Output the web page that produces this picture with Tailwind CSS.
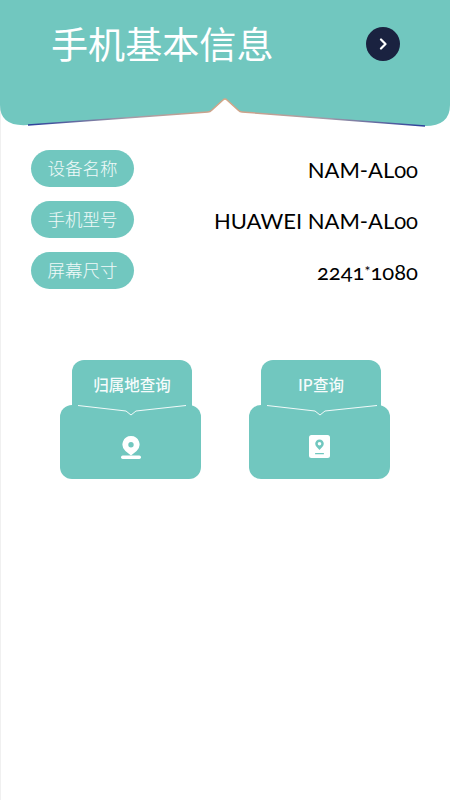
<!DOCTYPE html>
<html lang="zh-CN">
<head>
  <meta charset="UTF-8">
  <meta name="viewport" content="width=device-width, initial-scale=1.0">
  <title>手机基本信息</title>
  <script src="https://cdn.jsdelivr.net/npm/@tailwindcss/browser@4"></script>
</head>
<body class="w-[450px] h-[800px] overflow-hidden bg-white shadow-[inset_1px_0_0_#f0f0f0] font-['Lato','Noto_Sans_CJK_SC',sans-serif]">

  <!-- header -->
  <header class="relative h-[128px]">
    <svg class="absolute inset-0" width="450" height="128" viewBox="0 0 450 128">
      <defs>
        <linearGradient id="edge" x1="0" x2="1" y1="0" y2="0">
          <stop offset="0" stop-color="#2a3f9a"/>
          <stop offset="0.25" stop-color="#a39aa8"/>
          <stop offset="0.5" stop-color="#d6a585"/>
          <stop offset="0.75" stop-color="#a39aa8"/>
          <stop offset="1" stop-color="#2a3f9a"/>
        </linearGradient>
      </defs>
      <path d="M0 0H450V105Q450 126 425 126L242 112Q240 112 238 110L227 100Q225 98 223 100L212 110Q210 112 208 112L28 125Q0 127 0 105Z" fill="#71c7bf"/>
      <path d="M425 126L242 112Q240 112 238 110L227 100Q225 98 223 100L212 110Q210 112 208 112L28 125" fill="none" stroke="url(#edge)" stroke-width="1.500"/>
    </svg>
    <div class="relative flex items-center justify-between pl-[51px] pr-[50px] pt-[26px]">
      <h1 class="-mt-[2px] text-[37.100px] leading-[38px] text-white font-['Noto_Sans_CJK_SC',sans-serif]">手机基本信息</h1>
      <button class="w-[34px] h-[34px] rounded-full bg-[#1a2240] flex items-center justify-center">
        <svg width="12" height="12" viewBox="0 0 12 12" fill="none" stroke="#fff" stroke-width="2.200" stroke-linecap="round" stroke-linejoin="round"><path d="M4 1.500 8.500 6 4 10.500"/></svg>
      </button>
    </div>
  </header>

  <!-- device info -->
  <section class="mt-[22px] pl-[31px] pr-[32px] flex flex-col gap-[14.500px]">
    <div class="flex items-center justify-between">
      <span class="w-[103px] h-[36.500px] rounded-full bg-[#71c7bf] flex items-center justify-center text-[17.500px] text-white/90 font-['Noto_Sans_CJK_SC',sans-serif] font-light">设备名称</span>
      <span class="mt-[2px] text-[22px] text-black oldstyle-nums">NAM-AL00</span>
    </div>
    <div class="flex items-center justify-between">
      <span class="w-[103px] h-[36.500px] rounded-full bg-[#71c7bf] flex items-center justify-center text-[17.500px] text-white/90 font-['Noto_Sans_CJK_SC',sans-serif] font-light">手机型号</span>
      <span class="mt-[2px] text-[22px] text-black oldstyle-nums">HUAWEI NAM-AL00</span>
    </div>
    <div class="flex items-center justify-between">
      <span class="w-[103px] h-[36.500px] rounded-full bg-[#71c7bf] flex items-center justify-center text-[17.500px] text-white/90 font-['Noto_Sans_CJK_SC',sans-serif] font-light">屏幕尺寸</span>
      <span class="mt-[2px] text-[22px] text-black oldstyle-nums">2241<span class="text-[14px] align-[4px]">*</span>1080</span>
    </div>
  </section>

  <!-- lookup cards -->
  <section class="mt-[71px] pl-[60px] flex gap-[48px]">
    <div class="relative w-[141px]">
      <div class="mx-[12px] w-[120px] h-[60px] rounded-[12px] bg-[#71c7bf] pt-[12px] text-center text-[15.500px] leading-[24px] font-medium text-white/95 font-['Noto_Sans_CJK_SC',sans-serif]">归属地查询</div>
      <div class="-mt-[15px] relative h-[74px] rounded-[12px] bg-[#71c7bf] flex items-center justify-center pt-[11px]">
        <svg width="20" height="24" viewBox="0 0 20 24" fill="#fff">
          <path fill-rule="evenodd" d="M10 1a8.500 8.500 0 0 1 5.600 14.900L10 20.500 4.400 15.900A8.500 8.500 0 0 1 10 1Zm0 6a2.700 2.700 0 1 0 0 5.400 2.700 2.700 0 0 0 0-5.400Z"/>
          <rect y="20.500" width="20" height="3.500" rx="1.700"/>
        </svg>
      </div>
      <svg class="absolute left-0 top-[44px]" width="141" height="14" viewBox="0 0 141 14" fill="none" stroke="#fff" stroke-opacity="0.9" stroke-width="1"><path d="M18 1.500 66 7 71 11 76 7 126 1.500"/></svg>
    </div>
    <div class="relative w-[141px]">
      <div class="mx-[12px] w-[120px] h-[60px] rounded-[12px] bg-[#71c7bf] pt-[12px] text-center text-[15.500px] leading-[24px] font-medium text-white/95 font-['Noto_Sans_CJK_SC',sans-serif]">IP查询</div>
      <div class="-mt-[15px] relative h-[74px] rounded-[12px] bg-[#71c7bf] flex items-center justify-center pt-[10px]">
        <svg width="21" height="23" viewBox="0 0 21 23">
          <rect width="21" height="23" rx="2.500" fill="#fff"/>
          <path fill-rule="evenodd" d="M10.500 4.500a4.300 4.300 0 0 1 4.300 4.300c0 2.400-2.600 4.300-4.300 6.200-1.700-1.900-4.300-3.800-4.300-6.200a4.300 4.300 0 0 1 4.300-4.300Zm0 2.500a1.800 1.800 0 1 0 0 3.600 1.800 1.800 0 0 0 0-3.600Z" fill="#71c7bf"/>
          <rect x="6" y="18" width="9" height="1.300" rx="0.600" fill="#71c7bf"/>
        </svg>
      </div>
      <svg class="absolute left-0 top-[44px]" width="141" height="14" viewBox="0 0 141 14" fill="none" stroke="#fff" stroke-opacity="0.9" stroke-width="1"><path d="M18 1.500 66 7 71 11 76 7 128 1.500"/></svg>
    </div>
  </section>

</body>
</html>
